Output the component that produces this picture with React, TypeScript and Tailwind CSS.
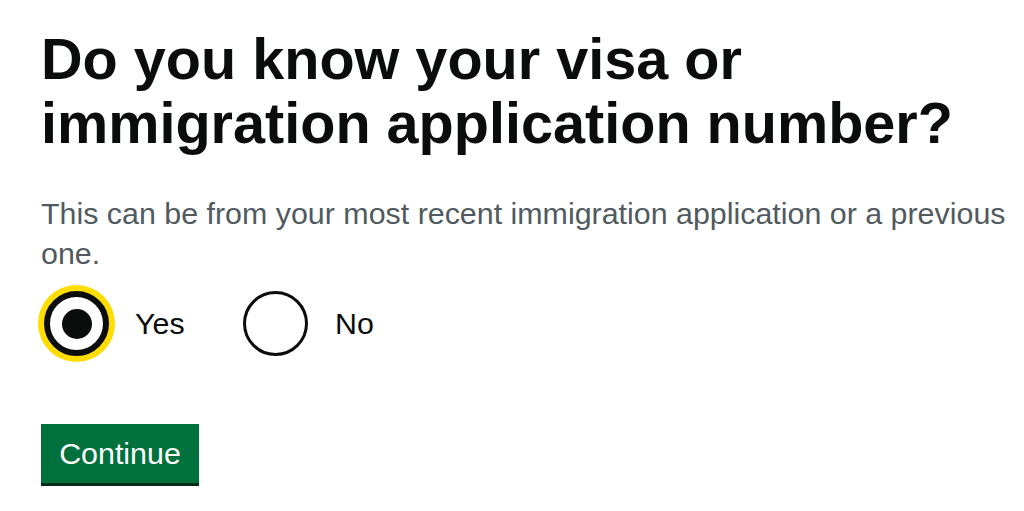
import React from "react";

export default function App() {
  return (
    <div className="min-h-[511px] bg-white pl-[41px] pt-[27px]" style={{ fontFamily: '"Liberation Sans", Arial, sans-serif' }}>
      <h1 className="text-[57.6px] leading-[64px] font-bold text-[#0b0c0c] w-[960px]">
        Do you know your visa or immigration application number?
      </h1>
      <p className="mt-[38px] text-[30.4px] leading-[40px] text-[#505a5f] w-[983px]">
        This can be from your most recent immigration application or a previous one.
      </p>
      <div className="mt-[18px] flex items-center">
        <div className="w-[202px] flex items-center">
          <div className="w-[77px] h-[77px] rounded-full bg-[#ffdd00] flex items-center justify-center -ml-[3px] -my-[6px]">
            <div className="w-[65px] h-[65px] rounded-full border-[6px] border-[#0b0c0c] bg-white flex items-center justify-center">
              <div className="w-[30px] h-[30px] rounded-full bg-[#0b0c0c]" />
            </div>
          </div>
          <span className="ml-[20px] text-[30.4px] text-[#0b0c0c]">Yes</span>
        </div>
        <div className="flex items-center">
          <div className="w-[65px] h-[65px] rounded-full border-[3px] border-[#0b0c0c] bg-white" />
          <span className="ml-[27px] text-[30.4px] text-[#0b0c0c]">No</span>
        </div>
      </div>
      <button className="mt-[68px] h-[59px] w-[158px] bg-[#00703c] text-white text-[30.4px] leading-none shadow-[0_3px_0_#002d18] block">
        Continue
      </button>
    </div>
  );
}
